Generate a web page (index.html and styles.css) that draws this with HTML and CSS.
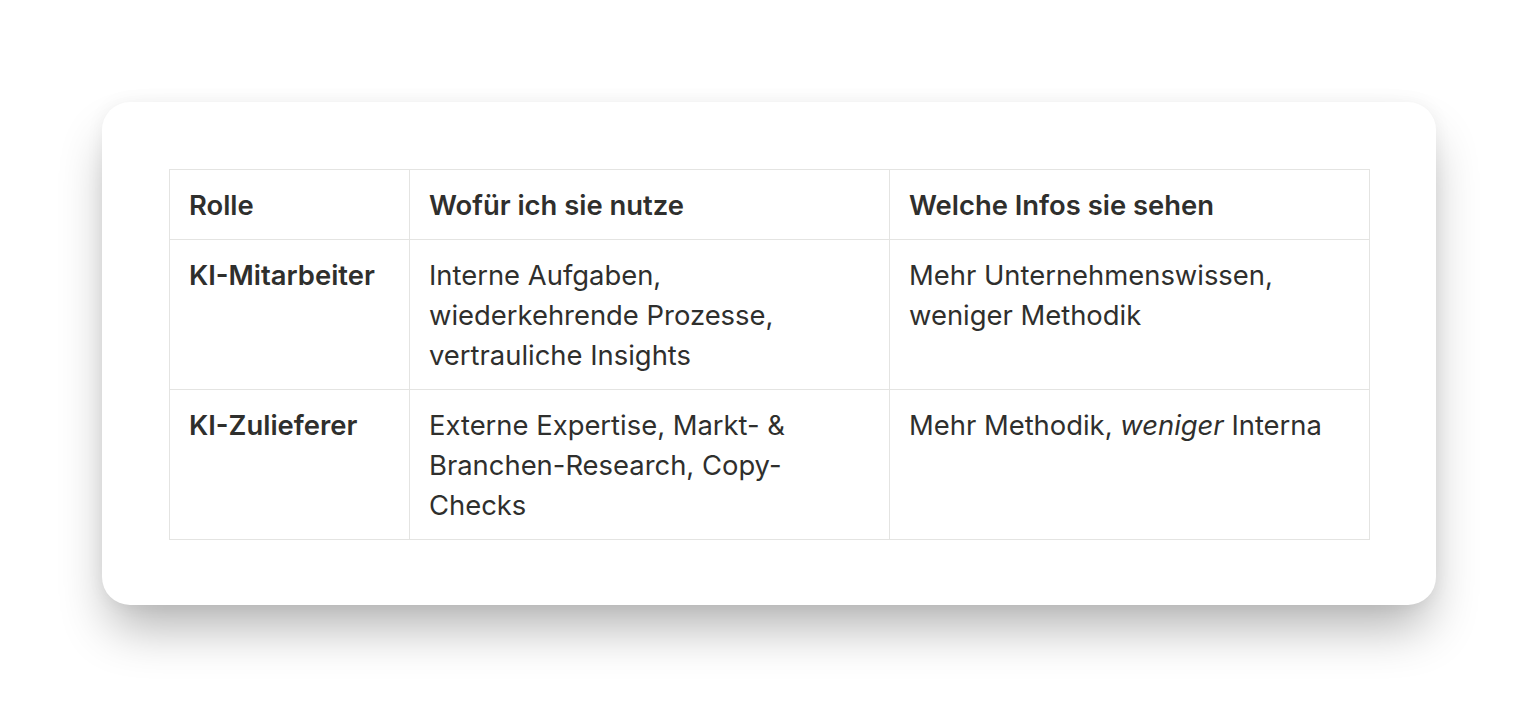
FILE: index.html
```html
<!DOCTYPE html>
<html lang="de">
<head>
<meta charset="utf-8">
<link rel="stylesheet" href="styles.css">
</head>
<body>
<div class="card">
  <table class="roles">
    <colgroup>
      <col class="c1"><col class="c2"><col class="c3">
    </colgroup>
    <thead>
      <tr><th>Rolle</th><th>Wofür ich sie nutze</th><th>Welche Infos sie sehen</th></tr>
    </thead>
    <tbody>
      <tr>
        <td class="role">KI-Mitarbeiter</td>
        <td>Interne Aufgaben, wiederkehrende Prozesse, vertrauliche Insights</td>
        <td>Mehr Unternehmenswissen, weniger Methodik</td>
      </tr>
      <tr>
        <td class="role">KI-Zulieferer</td>
        <td>Externe Expertise, Markt- &amp; Branchen-Research, Copy-Checks</td>
        <td>Mehr Methodik, <em>weniger</em> Interna</td>
      </tr>
    </tbody>
  </table>
</div>
</body>
</html>
```
FILE: styles.css
```css
html, body {
  margin: 0;
  padding: 0;
  background: #ffffff;
}
body {
  font-family: Inter, "Noto Sans", sans-serif;
  color: #2f2f2d;
  padding-top: 102px;
  min-height: 708px;
  box-sizing: border-box;
}
.card {
  width: 1334px;
  height: 503px;
  box-sizing: border-box;
  margin: 0 auto;
  background: #ffffff;
  border-radius: 28px;
  padding: 67px;
  box-shadow: 0 0 18px rgba(0, 0, 0, 0.05), 0 30px 50px -8px rgba(0, 0, 0, 0.3);
}
.roles {
  border-collapse: collapse;
  table-layout: fixed;
  width: 1200px;
  font-size: 27.4px;
  line-height: 40px;
}
.c1 { width: 240px; }
.c2 { width: 480px; }
.c3 { width: 480px; }
.roles th, .roles td {
  border: 1px solid #e4e4e2;
  padding: 15px 19px 14px;
  text-align: left;
  vertical-align: top;
}
.roles th, .roles td.role {
  font-weight: 600;
}
.roles em {
  font-style: italic;
}
```
